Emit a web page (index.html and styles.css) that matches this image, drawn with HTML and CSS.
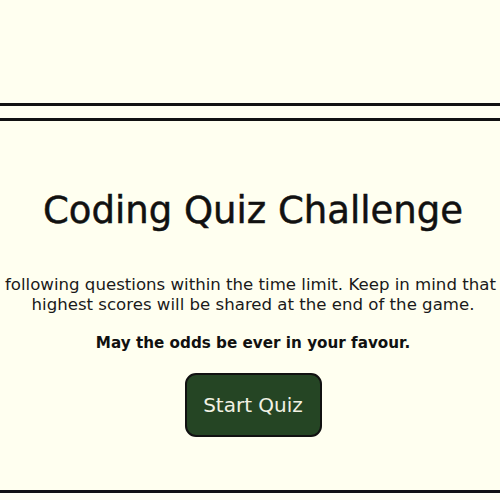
FILE: index.html
```html
<!DOCTYPE html>
<html lang="en">
<head>
<meta charset="utf-8">
<title>Coding Quiz Challenge</title>
<link rel="stylesheet" href="styles.css">
</head>
<body>
<header class="top-bar"></header>
<main class="quiz">
  <h1 class="quiz-title">Coding Quiz Challenge</h1>
  <p class="quiz-intro">Try the following questions within the time limit. Keep in mind that all your<br>highest scores will be shared at the end of the game.</p>
  <p class="quiz-motto">May the odds be ever in your favour.</p>
  <button class="start-btn" type="button">Start Quiz</button>
</main>
</body>
</html>
```
FILE: styles.css
```css
html, body {
  margin: 0;
  padding: 0;
  background: #fffff0;
  overflow: hidden;
}
body {
  font-family: "DejaVu Sans", Verdana, sans-serif;
  color: #111;
}
.top-bar {
  height: 103px;
  border-bottom: 3px solid #111;
}
.quiz {
  margin-top: 12px;
  border-top: 3px solid #111;
  border-bottom: 3px solid #111;
  display: flex;
  flex-direction: column;
  align-items: center;
  padding: 68px 0 53px 6px;
}
.quiz-title {
  margin: 0;
  font-size: 37px;
  font-weight: normal;
  line-height: 43px;
  white-space: nowrap;
  -webkit-text-stroke: 0.5px #111;
}
.quiz-intro {
  margin: 43px 0 0;
  font-size: 16.6px;
  line-height: 20px;
  text-align: center;
  white-space: nowrap;
  color: #1a1a1a;
}
.quiz-motto {
  margin: 18px 0 0;
  font-size: 15.2px;
  font-weight: bold;
  line-height: 20px;
  white-space: nowrap;
}
.start-btn {
  margin-top: 20px;
  width: 137px;
  height: 64px;
  background: #254524;
  color: #f2f2e4;
  border: 2px solid #111;
  border-radius: 11px;
  font-family: "DejaVu Sans", Verdana, sans-serif;
  font-size: 20px;
  padding: 0;
  cursor: pointer;
}
```
